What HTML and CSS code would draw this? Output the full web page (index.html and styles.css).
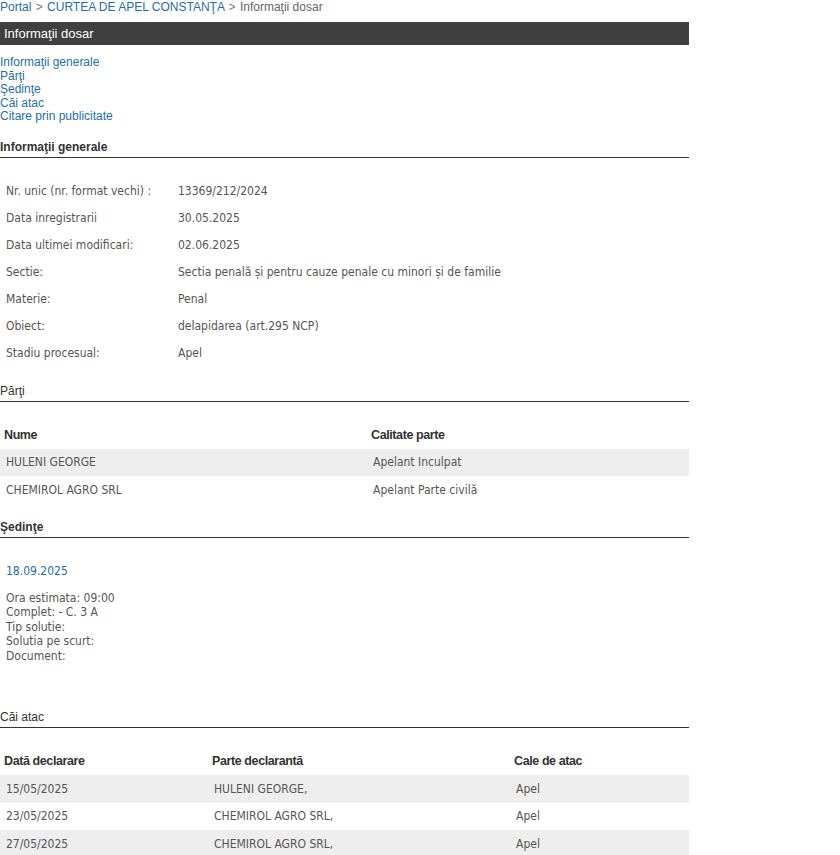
FILE: index.html
```html
<!DOCTYPE html>
<html lang="ro">
<head>
    <meta charset="UTF-8">
    <title>Informaţii dosar</title>
    <link rel="stylesheet" href="styles.css">
</head>
<body>
    <div class="page">
        <div class="breadcrumb">
            <a href="#">Portal</a>
            <span class="sep">&gt;</span>
            <a href="#">CURTEA DE APEL CONSTANŢA</a>
            <span class="sep">&gt;</span>
            <span class="current">Informaţii dosar</span>
        </div>
        <div class="titlebar">Informaţii dosar</div>
        <ul class="menu">
            <li><a href="#gen">Informaţii generale</a></li>
            <li><a href="#parti">Părţi</a></li>
            <li><a href="#sedinte">Şedinţe</a></li>
            <li><a href="#cai">Căi atac</a></li>
            <li><a href="#citare">Citare prin publicitate</a></li>
        </ul>

        <h3 class="section bold" id="gen">Informaţii generale</h3>
        <table class="info">
            <tr><td class="label">Nr. unic (nr. format vechi) :</td><td>13369/212/2024</td></tr>
            <tr><td class="label">Data inregistrarii</td><td>30.05.2025</td></tr>
            <tr><td class="label">Data ultimei modificari:</td><td>02.06.2025</td></tr>
            <tr><td class="label">Sectie:</td><td>Sectia penală și pentru cauze penale cu minori și de familie</td></tr>
            <tr><td class="label">Materie:</td><td>Penal</td></tr>
            <tr><td class="label">Obiect:</td><td>delapidarea (art.295 NCP)</td></tr>
            <tr><td class="label">Stadiu procesual:</td><td>Apel</td></tr>
        </table>

        <h3 class="section" id="parti">Părţi</h3>
        <table class="grid">
            <thead>
                <tr><th class="col-parte">Nume</th><th>Calitate parte</th></tr>
            </thead>
            <tbody>
                <tr class="odd"><td>HULENI GEORGE</td><td>Apelant Inculpat</td></tr>
                <tr><td>CHEMIROL AGRO SRL</td><td>Apelant Parte civilă</td></tr>
            </tbody>
        </table>

        <h3 class="section bold" id="sedinte">Şedinţe</h3>
        <div class="sedinta">
            <div class="sedinta-date">18.09.2025</div>
            <div class="sedinta-info">
                Ora estimata: 09:00<br>
                Complet: - C. 3 A<br>
                Tip solutie:<br>
                Solutia pe scurt:<br>
                Document:
            </div>
        </div>

        <h3 class="section" id="cai">Căi atac</h3>
        <table class="grid">
            <thead>
                <tr><th class="col-data">Dată declarare</th><th class="col-decl">Parte declarantă</th><th>Cale de atac</th></tr>
            </thead>
            <tbody>
                <tr class="odd"><td>15/05/2025</td><td>HULENI GEORGE,</td><td>Apel</td></tr>
                <tr><td>23/05/2025</td><td>CHEMIROL AGRO SRL,</td><td>Apel</td></tr>
                <tr class="odd"><td>27/05/2025</td><td>CHEMIROL AGRO SRL,</td><td>Apel</td></tr>
            </tbody>
        </table>
    </div>
</body>
</html>
```

FILE: styles.css
```css
body {
    margin: 0;
    padding: 0;
    background: #fff;
    font-family: "Liberation Sans", Arial, sans-serif;
    font-size: 12px;
    color: #555;
}
a {
    color: #1f6ea8;
    text-decoration: none;
}
.page {
    width: 689px;
}
.breadcrumb {
    height: 15px;
    line-height: 15px;
}
.breadcrumb .sep {
    color: #777;
    margin: 0 1px;
}
.breadcrumb .current {
    color: #666;
}
.titlebar {
    margin-top: 7px;
    height: 23px;
    line-height: 23px;
    background: #404040;
    color: #fff;
    font-size: 13px;
    padding-left: 4px;
}
.menu {
    list-style: none;
    margin: 11px 0 0 0;
    padding: 0;
    line-height: 13.5px;
}
.section {
    margin: 0;
    font-size: 12px;
    font-weight: normal;
    color: #333;
    border-bottom: 1px solid #333;
    padding-bottom: 3px;
    line-height: 14px;
}
.section.bold {
    font-weight: bold;
}
#gen {
    margin-top: 16px;
}
#parti {
    margin-top: 17px;
}
#sedinte {
    margin-top: 16px;
}
#cai {
    margin-top: 47px;
}
.info {
    border-collapse: collapse;
    margin-top: 20px;
    font-family: "DejaVu Sans Condensed", "DejaVu Sans", sans-serif;
    font-size: 12px;
    color: #555;
}
.info td {
    height: 27px;
    padding: 0 0 0 6px;
    vertical-align: middle;
}
.info td.label {
    width: 166px;
}
.grid {
    width: 100%;
    border-collapse: collapse;
    margin-top: 19px;
    font-family: "DejaVu Sans Condensed", "DejaVu Sans", sans-serif;
    font-size: 12px;
    color: #555;
}
.grid th {
    text-align: left;
    font-family: "Liberation Sans", Arial, sans-serif;
    font-size: 12.5px;
    letter-spacing: -0.4px;
    font-weight: bold;
    color: #333;
    height: 28px;
    padding: 0 0 0 4px;
}
.grid td {
    height: 27.5px;
    padding: 0 0 0 6px;
}
.grid tr.odd td {
    background: #eee;
}
.col-parte {
    width: 363px;
}
.col-data {
    width: 204px;
}
.col-decl {
    width: 298px;
}
.sedinta {
    padding: 26px 0 0 6px;
    font-family: "DejaVu Sans Condensed", "DejaVu Sans", sans-serif;
    font-size: 12px;
    color: #555;
}
.sedinta-date {
    color: #1f6ea8;
    line-height: 14px;
}
.sedinta-info {
    margin-top: 13px;
    line-height: 14.5px;
}
```
